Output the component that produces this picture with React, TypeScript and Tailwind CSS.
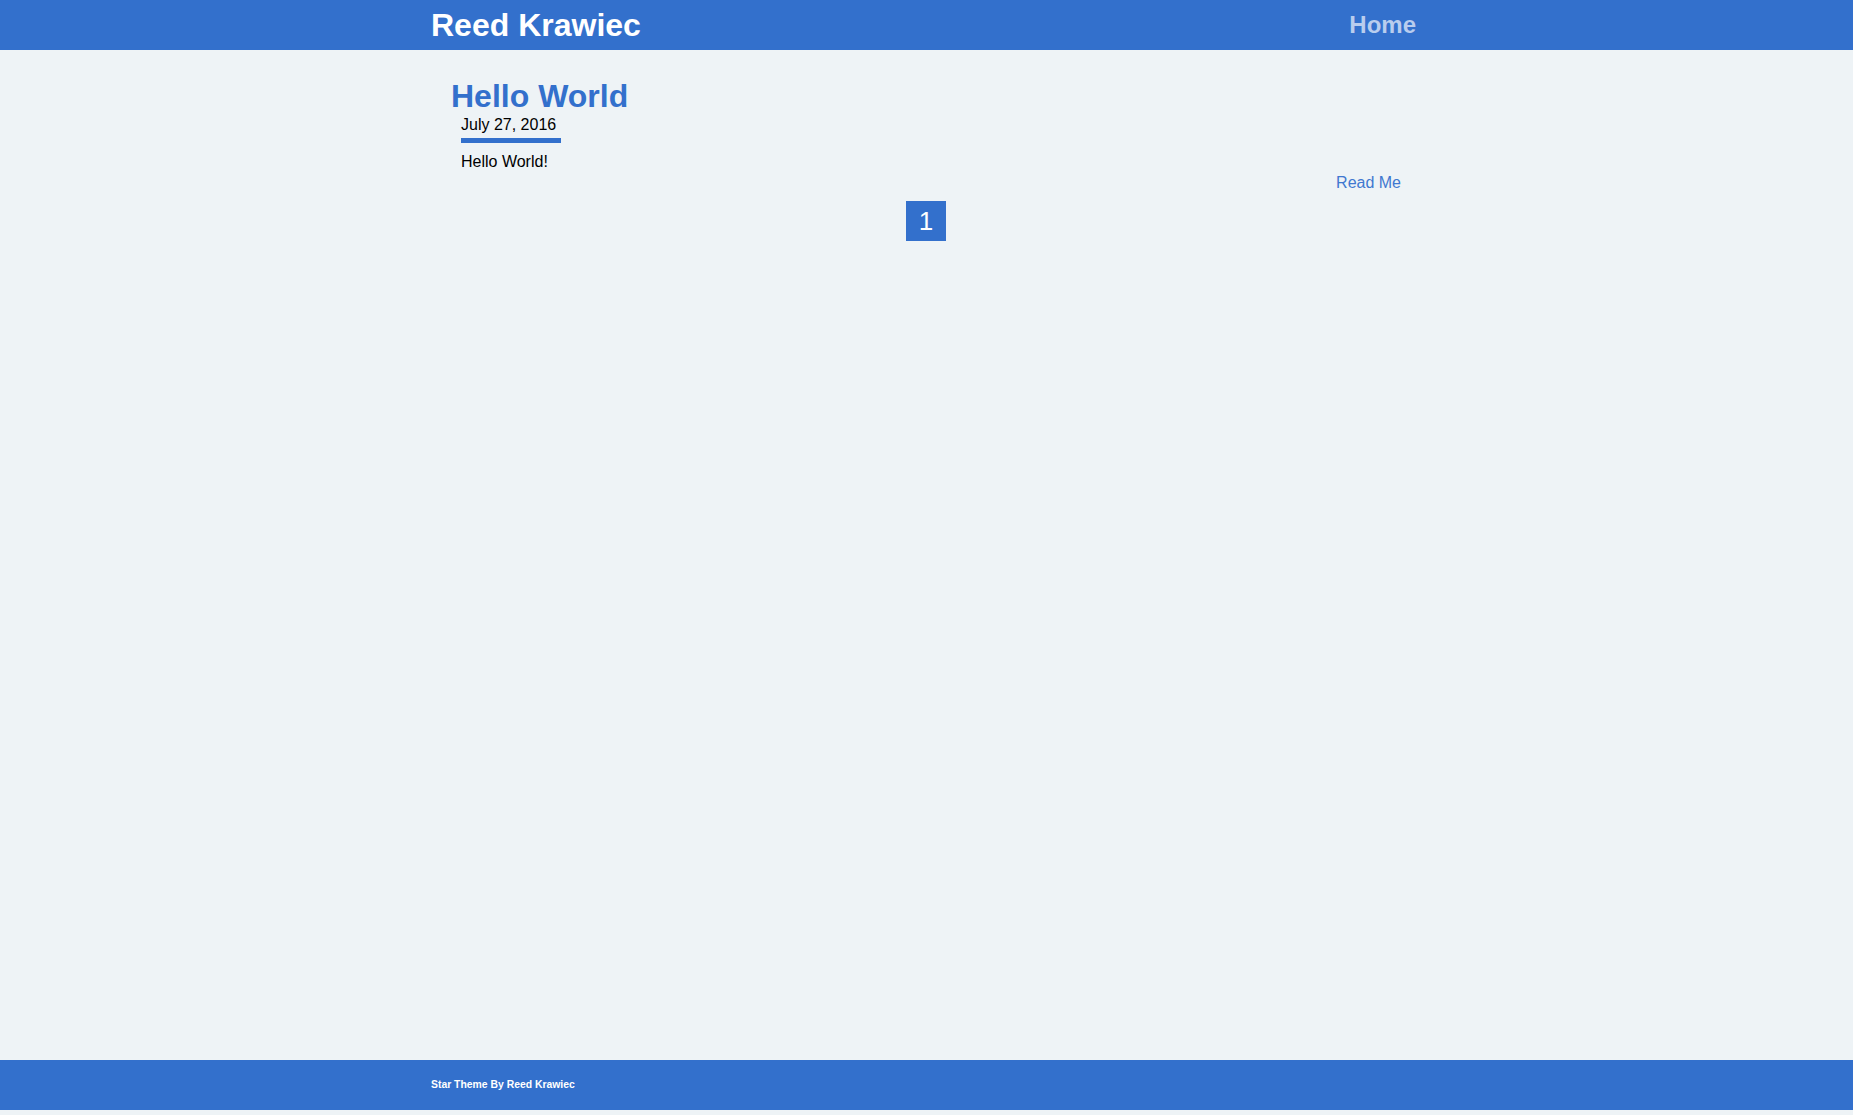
export default function App() {
  return (
    <div className="min-h-screen flex flex-col bg-[#eef3f6] font-['Liberation_Sans',Arial,sans-serif]">
      <header className="h-[50px] bg-[#3370cc]">
        <div className="w-[995px] mx-auto h-full flex items-center justify-between">
          <a className="text-[32px] font-bold text-white leading-none pl-[2px]">Reed Krawiec</a>
          <a className="text-[24px] font-bold text-[#b9cdee] leading-none pr-[8px]">Home</a>
        </div>
      </header>

      <main className="flex-1">
        <div className="w-[995px] mx-auto pt-[28px]">
          <article className="ml-[22px] mr-[23px]">
            <h1 className="text-[32px] font-bold text-[#3370cc] leading-[1.15]">Hello World</h1>
            <div className="pl-[10px]">
              <div className="w-[100px] text-[16px] text-black leading-[1.15] pt-[1px] pb-[4px] border-b-[5px] border-[#3370cc]">
                July 27, 2016
              </div>
              <p className="mt-[10px] text-[16px] text-black leading-[1.15]">Hello World!</p>
            </div>
            <div className="flex justify-end mt-[2px]">
              <a className="text-[16px] text-[#3f78d0] leading-[1.15]">Read Me</a>
            </div>
          </article>
          <div className="flex justify-center mt-[9px] pr-[1px]">
            <span className="w-[40px] h-[40px] bg-[#3370cc] text-white text-[26px] flex items-center justify-center leading-none">
              1
            </span>
          </div>
        </div>
      </main>

      <footer className="h-[50px] bg-[#3370cc] mb-[5px]">
        <div className="w-[995px] mx-auto h-full flex items-center">
          <span className="text-[10.4px] font-bold text-white pl-[2px]">Star Theme By Reed Krawiec</span>
        </div>
      </footer>
    </div>
  );
}
